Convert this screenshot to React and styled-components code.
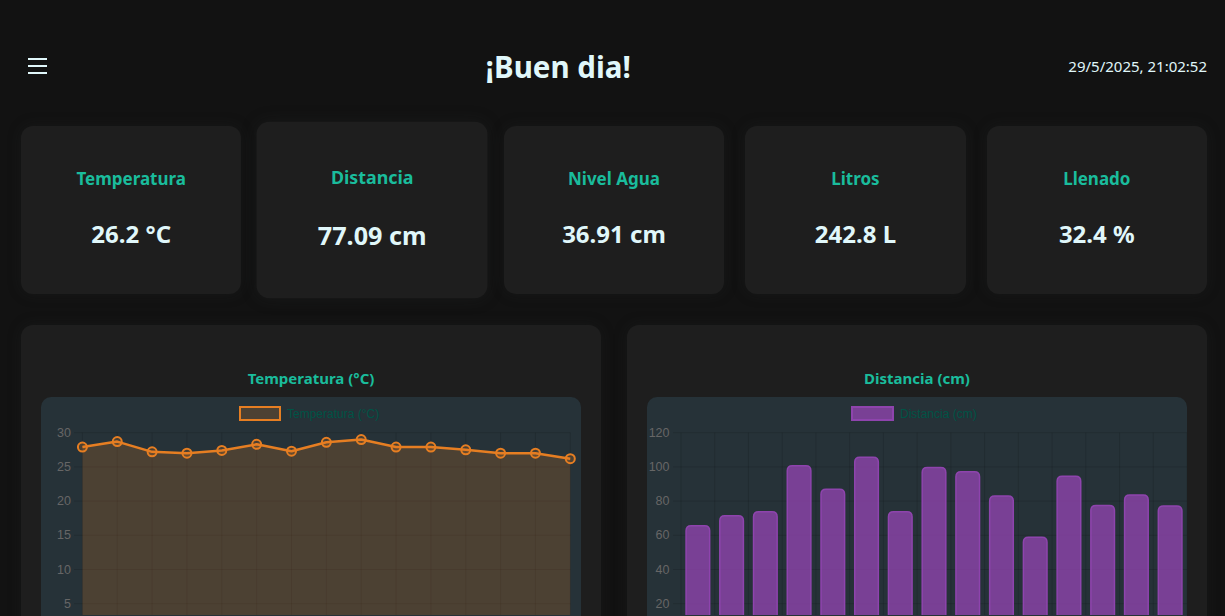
import React from "react";
import styled, { createGlobalStyle } from "styled-components";

const temps = [27.9, 28.7, 27.2, 27.0, 27.4, 28.3, 27.3, 28.6, 29.0, 27.9, 27.9, 27.5, 27.0, 27.0, 26.2];
const dists = [65.6, 71.5, 73.8, 100.6, 87, 105.7, 73.8, 99.6, 97.1, 83, 58.9, 94.6, 77.4, 83.5, 77.09];

const stats = [
  { label: "Temperatura", value: "26.2 °C" },
  { label: "Distancia", value: "77.09 cm", active: true },
  { label: "Nivel Agua", value: "36.91 cm" },
  { label: "Litros", value: "242.8 L" },
  { label: "Llenado", value: "32.4 %" },
];

const GRID = "rgba(0,0,0,0.12)";
const TICK = "#666";
const LEGEND = "#005446";

const TempChart = () => {
  const left = 41.4;
  const right = 529.3;
  const top = 35.7;
  const unit = 6.84;
  const bottom = top + 30 * unit;
  const step = (right - left) / (temps.length - 1);
  const y = (v) => top + (30 - v) * unit;
  const pts = temps.map((v, i) => [left + i * step, y(v)]);
  const line = pts.map((p, i) => (i ? "L" : "M") + p[0] + " " + p[1]).join(" ");
  const area = line + ` L${right} ${bottom} L${left} ${bottom} Z`;

  return (
    <svg width="540" height="218" viewBox="0 0 540 218">
      <rect x="199" y="10" width="40" height="13" fill="rgba(230,126,34,0.2)" stroke="#e67e22" strokeWidth="2" />
      <text x="246" y="21" fontSize="12" fill={LEGEND} fontFamily="Liberation Sans, Arial, sans-serif">
        Temperatura (°C)
      </text>
      {[30, 25, 20, 15, 10, 5, 0].map((t) => (
        <g key={t}>
          <line x1="33" x2={right} y1={y(t)} y2={y(t)} stroke={GRID} />
          {t > 0 && (
            <text x="30" y={y(t) + 4} fontSize="12.5" fill={TICK} textAnchor="end" fontFamily="Liberation Sans Narrow, Liberation Sans, Arial, sans-serif">
              {t}
            </text>
          )}
        </g>
      ))}
      {pts.map((p, i) => (
        <line key={i} x1={p[0]} x2={p[0]} y1={top} y2={bottom + 8} stroke={GRID} />
      ))}
      <path d={area} fill="rgba(230,126,34,0.2)" />
      <path d={line} fill="none" stroke="#e67e22" strokeWidth="2.5" strokeLinejoin="round" />
      {pts.map((p, i) => (
        <circle key={i} cx={p[0]} cy={p[1]} r="4.5" fill="rgba(230,126,34,0.2)" stroke="#e67e22" strokeWidth="2" />
      ))}
    </svg>
  );
};

const DistChart = () => {
  const left = 34;
  const right = 540;
  const top = 35.7;
  const unit = 1.71;
  const bottom = top + 120 * unit;
  const cat = (right - left) / dists.length;
  const bw = cat * 0.7;
  const y = (v) => top + (120 - v) * unit;
  const bar = (x, yt, w, r) =>
    `M${x} ${bottom} L${x} ${yt + r} Q${x} ${yt} ${x + r} ${yt} L${x + w - r} ${yt} Q${x + w} ${yt} ${x + w} ${yt + r} L${x + w} ${bottom} Z`;

  return (
    <svg width="540" height="218" viewBox="0 0 540 218">
      <rect x="205" y="10" width="41" height="13" fill="rgba(142,68,173,0.8)" stroke="#8e44ad" strokeWidth="2" />
      <text x="253" y="21" fontSize="12" fill={LEGEND} fontFamily="Liberation Sans, Arial, sans-serif">
        Distancia (cm)
      </text>
      {[120, 100, 80, 60, 40, 20, 0].map((t) => (
        <g key={t}>
          <line x1="26" x2={right} y1={y(t)} y2={y(t)} stroke={GRID} />
          {t > 0 && (
            <text x="22.5" y={y(t) + 4} fontSize="12.5" fill={TICK} textAnchor="end" fontFamily="Liberation Sans Narrow, Liberation Sans, Arial, sans-serif">
              {t}
            </text>
          )}
        </g>
      ))}
      {dists.concat([0]).map((_, i) => (
        <line key={i} x1={left + i * cat} x2={left + i * cat} y1={top} y2={bottom + 8} stroke={GRID} />
      ))}
      {dists.map((v, i) => (
        <path
          key={i}
          d={bar(left + i * cat + (cat - bw) / 2, y(v), bw, 5)}
          fill="rgba(142,68,173,0.8)"
          stroke="#8e44ad"
          strokeWidth="1.5"
        />
      ))}
    </svg>
  );
};

const App = () => {
  return (
    <>
      <GlobalStyle />
      <Page>
        <Header>
          <MenuButton aria-label="menu">
            <svg width="20" height="18" viewBox="0 0 20 18">
              <rect x="0" y="1" width="19" height="2" fill="#e0f7fa" />
              <rect x="0" y="8" width="19" height="2" fill="#e0f7fa" />
              <rect x="0" y="15" width="19" height="2" fill="#e0f7fa" />
            </svg>
          </MenuButton>
          <Title>¡Buen dia!</Title>
          <DateText>29/5/2025, 21:02:52</DateText>
        </Header>

        <Cards>
          {stats.map((s) => (
            <Card key={s.label} $active={s.active}>
              <CardLabel>{s.label}</CardLabel>
              <CardValue>{s.value}</CardValue>
            </Card>
          ))}
        </Cards>

        <Charts>
          <Panel>
            <PanelTitle>Temperatura (°C)</PanelTitle>
            <ChartBox>
              <TempChart />
            </ChartBox>
          </Panel>
          <Panel>
            <PanelTitle>Distancia (cm)</PanelTitle>
            <ChartBox>
              <DistChart />
            </ChartBox>
          </Panel>
        </Charts>
      </Page>
    </>
  );
};

export default App;

const GlobalStyle = createGlobalStyle`
  html, body {
    margin: 0;
    padding: 0;
    overflow: hidden;
    background-color: #121212;
  }
  body {
    font-family: "Noto Sans", "Open Sans", sans-serif;
    color: #e0f7fa;
  }
`;

const Page = styled.div`
  height: 616px;
  overflow: hidden;
  background-color: #121212;
  padding: 40px 18px 0 21px;
  box-sizing: border-box;
`;

const Header = styled.header`
  display: flex;
  justify-content: space-between;
  align-items: center;
  height: 52px;
  padding-left: 7px;
`;

const MenuButton = styled.button`
  background: none;
  border: 0;
  padding: 0;
  display: flex;
  align-items: center;
  cursor: pointer;
`;

const Title = styled.h1`
  margin: 0;
  font-size: 29.5px;
  font-weight: 700;
  color: #e0f7fa;
`;

const DateText = styled.div`
  font-size: 15px;
  color: #e0f7fa;
`;

const Cards = styled.div`
  display: grid;
  grid-template-columns: repeat(5, 1fr);
  gap: 21px;
  margin-top: 34px;
`;

const Card = styled.div`
  height: 168px;
  box-sizing: border-box;
  padding-bottom: 3px;
  background-color: #1e1e1e;
  border-radius: 12px;
  box-shadow: 0 0 14px rgba(40, 44, 44, 0.25);
  display: flex;
  flex-direction: column;
  align-items: center;
  justify-content: center;
  gap: 29px;
  transform: scale(${(p) => (p.$active ? 1.05 : 1)});
`;

const CardLabel = styled.h3`
  margin: 0;
  font-size: 17px;
  line-height: 22px;
  font-weight: 700;
  color: #1abc9c;
`;

const CardValue = styled.div`
  font-size: 24px;
  line-height: 30px;
  font-weight: 700;
  color: #e0f7fa;
`;

const Charts = styled.div`
  display: grid;
  grid-template-columns: 1fr 1fr;
  gap: 26px;
  margin-top: 31px;
`;

const Panel = styled.div`
  background-color: #1e1e1e;
  border-radius: 12px;
  padding: 43px 20px 20px;
  box-shadow: 0 0 14px rgba(40, 44, 44, 0.25);
`;

const PanelTitle = styled.h4`
  margin: 0 0 9px;
  text-align: center;
  font-size: 15px;
  line-height: 20px;
  font-weight: 700;
  color: #1abc9c;
`;

const ChartBox = styled.div`
  background-color: #263238;
  border-radius: 10px;
  height: 290px;
  overflow: hidden;

  svg {
    display: block;
  }
`;
